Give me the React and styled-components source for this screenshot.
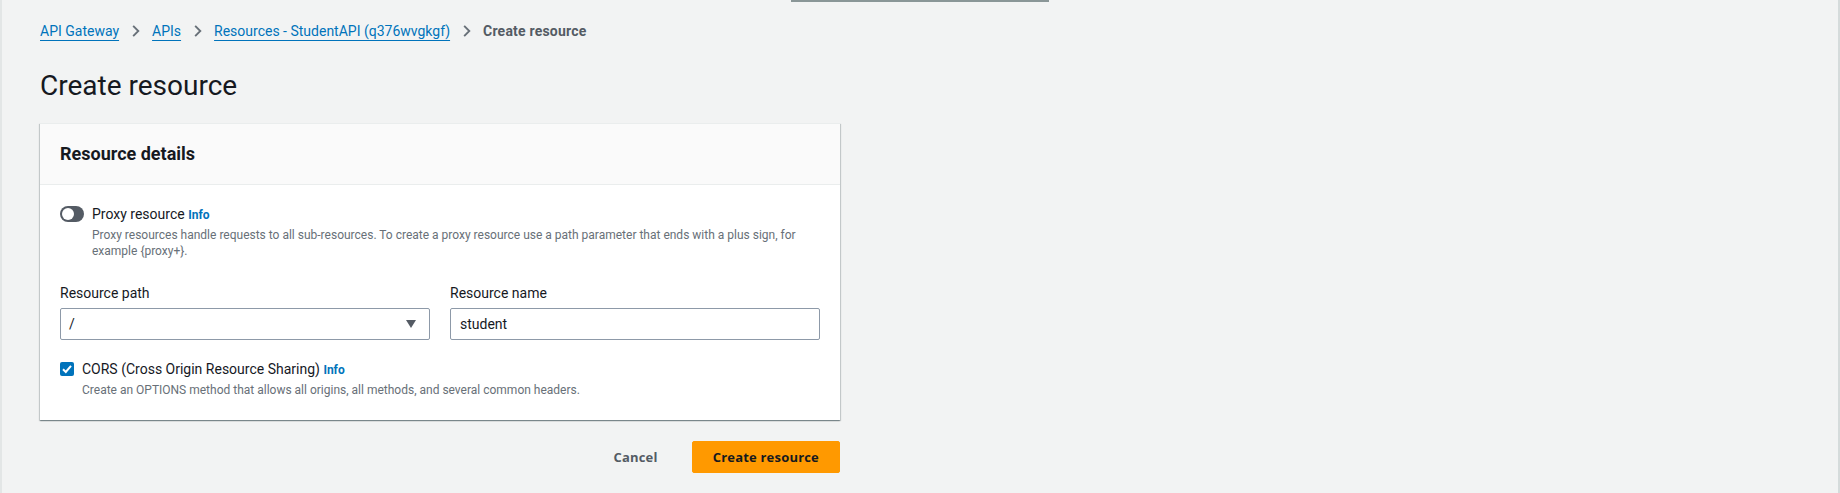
import React, { useState } from "react";
import styled, { createGlobalStyle } from "styled-components";

const GlobalStyle = createGlobalStyle`
  html, body {
    margin: 0;
    padding: 0;
    background: #f2f3f3;
  }
  body {
    font-family: Roboto, "Noto Sans", "Liberation Sans", sans-serif;
    color: #16191f;
  }
`;

function Chevron() {
  return (
    <ChevronIcon viewBox="0 0 16 16" width="15" height="16">
      <path d="M5.5 2.5 L11 8 L5.5 13.5" fill="none" stroke="#687078" strokeWidth="2" />
    </ChevronIcon>
  );
}

function CheckMark() {
  return (
    <svg viewBox="0 0 14 14" width="14" height="14">
      <path d="M3 7.2 L5.8 10 L11 3.8" fill="none" stroke="#fff" strokeWidth="2" />
    </svg>
  );
}

export default function App() {
  const [proxy, setProxy] = useState(false);
  const [cors, setCors] = useState(true);

  return (
    <Page>
      <GlobalStyle />
      <TopStrip>
        <TopBar />
      </TopStrip>

      <Content>
        {/* breadcrumbs */}
        <Crumbs>
          <CrumbLink href="#">API Gateway</CrumbLink>
          <Chevron />
          <CrumbLink href="#">APIs</CrumbLink>
          <Chevron />
          <CrumbLink href="#">Resources - StudentAPI (q376wvgkgf)</CrumbLink>
          <Chevron />
          <CrumbCurrent>Create resource</CrumbCurrent>
        </Crumbs>

        <PageTitle>Create resource</PageTitle>

        <Card>
          <CardHeader>
            <CardTitle>Resource details</CardTitle>
          </CardHeader>

          <CardBody>
            <OptionRow>
              <Toggle on={proxy} onClick={() => setProxy(!proxy)}>
                <Handle />
              </Toggle>
              <OptionText>
                <OptionLabel>
                  Proxy resource <Info href="#">Info</Info>
                </OptionLabel>
                <Hint>
                  Proxy resources handle requests to all sub-resources. To create a proxy resource use a path parameter that ends with a plus sign, for
                  <br />
                  example {"{proxy+}"}.
                </Hint>
              </OptionText>
            </OptionRow>

            <FieldGrid>
              <Field>
                <FieldLabel>Resource path</FieldLabel>
                <SelectBox>
                  <span>/</span>
                  <Caret viewBox="0 0 12 10" width="12" height="10">
                    <path d="M1 1 L11 1 L6 9 Z" fill="#545b64" />
                  </Caret>
                </SelectBox>
              </Field>
              <Field>
                <FieldLabel>Resource name</FieldLabel>
                <TextInput defaultValue="student" />
              </Field>
            </FieldGrid>

            <CheckRow>
              <CheckBox checked={cors} onClick={() => setCors(!cors)}>
                {cors && <CheckMark />}
              </CheckBox>
              <OptionText>
                <OptionLabel>
                  CORS (Cross Origin Resource Sharing) <Info href="#">Info</Info>
                </OptionLabel>
                <Hint>
                  Create an OPTIONS method that allows all origins, all methods, and several common headers.
                </Hint>
              </OptionText>
            </CheckRow>
          </CardBody>
        </Card>

        <Actions>
          <CancelButton>Cancel</CancelButton>
          <PrimaryButton>Create resource</PrimaryButton>
        </Actions>
      </Content>
    </Page>
  );
}

/* ---------- layout ---------- */

const Page = styled.div`
  min-height: 493px;
  box-sizing: border-box;
  border-left: 2px solid #e3e6e6;
  border-right: 2px solid #d5dbdb;
  background: #f2f3f3;
`;

const TopStrip = styled.div`
  display: flex;
  justify-content: center;
  height: 0;
`;

const TopBar = styled.div`
  width: 258px;
  height: 2px;
  background: #8a9697;
  flex-shrink: 0;
`;

const Content = styled.div`
  width: 800px;
  padding: 21px 0 0 38px;
`;

/* ---------- breadcrumbs ---------- */

const Crumbs = styled.nav`
  display: flex;
  align-items: center;
  gap: 9px;
  height: 20px;
  font-size: 14px;
  line-height: 20px;
`;

const ChevronIcon = styled.svg`
  display: block;
  flex-shrink: 0;
`;

const CrumbLink = styled.a`
  color: #0073bb;
  text-decoration: underline;
  text-underline-offset: 4px;
  white-space: nowrap;
`;

const CrumbCurrent = styled.span`
  color: #545b64;
  font-weight: 700;
  letter-spacing: 0.2px;
  white-space: nowrap;
`;

const PageTitle = styled.h1`
  margin: 27px 0 0;
  font-size: 28px;
  line-height: 36px;
  font-weight: 400;
  color: #16191f;
`;

/* ---------- card ---------- */

const Card = styled.div`
  margin-top: 19px;
  background: #fff;
  border-top: 1px solid #eaeded;
  box-shadow: 0 1px 1px 0 rgba(0, 28, 36, 0.3),
    1px 1px 1px 0 rgba(0, 28, 36, 0.15),
    -1px 1px 1px 0 rgba(0, 28, 36, 0.15);
`;

const CardHeader = styled.div`
  background: #fafafa;
  border-bottom: 1px solid #eaeded;
  padding: 18px 20px;
`;

const CardTitle = styled.h2`
  margin: 0;
  font-size: 18px;
  line-height: 24px;
  font-weight: 700;
  color: #16191f;
`;

const CardBody = styled.div`
  padding: 19px 20px 22px;
`;

const OptionRow = styled.div`
  display: flex;
  align-items: flex-start;
  gap: 8px;
`;

const CheckRow = styled(OptionRow)`
  margin-top: 19px;
`;

const OptionText = styled.div`
  display: flex;
  flex-direction: column;
  gap: 2px;
`;

const OptionLabel = styled.div`
  font-size: 14px;
  line-height: 20px;
  color: #16191f;
`;

const Info = styled.a`
  color: #0073bb;
  font-size: 12px;
  font-weight: 700;
  text-decoration: none;
`;

const Hint = styled.div`
  font-size: 12px;
  line-height: 16px;
  color: #687078;
`;

const Toggle = styled.div`
  width: 24px;
  height: 16px;
  margin-top: 2px;
  border-radius: 8px;
  background: ${({ on }) => (on ? "#0073bb" : "#545b64")};
  display: flex;
  align-items: center;
  justify-content: ${({ on }) => (on ? "flex-end" : "flex-start")};
  padding: 0 2px;
  box-sizing: border-box;
  flex-shrink: 0;
  cursor: pointer;
`;

const Handle = styled.div`
  width: 12px;
  height: 12px;
  border-radius: 50%;
  background: #fff;
`;

const CheckBox = styled.div`
  width: 14px;
  height: 14px;
  margin-top: 3px;
  border-radius: 2px;
  background: ${({ checked }) => (checked ? "#0073bb" : "#fff")};
  border: ${({ checked }) => (checked ? "none" : "2px solid #879596")};
  flex-shrink: 0;
  display: flex;
  cursor: pointer;
`;

/* ---------- fields ---------- */

const FieldGrid = styled.div`
  margin-top: 24px;
  display: grid;
  grid-template-columns: 1fr 1fr;
  gap: 20px;
`;

const Field = styled.div`
  display: flex;
  flex-direction: column;
  gap: 5px;
`;

const FieldLabel = styled.label`
  font-size: 14px;
  line-height: 20px;
  color: #16191f;
`;

const SelectBox = styled.div`
  height: 32px;
  box-sizing: border-box;
  border: 1px solid #8d99a8;
  border-radius: 2px;
  background: #fff;
  display: flex;
  align-items: center;
  justify-content: space-between;
  padding: 0 12px 0 8px;
  font-size: 14px;
  color: #16191f;
`;

const Caret = styled.svg`
  display: block;
`;

const TextInput = styled.input`
  height: 32px;
  box-sizing: border-box;
  border: 1px solid #8d99a8;
  border-radius: 2px;
  background: #fff;
  padding: 0 9px;
  font-family: inherit;
  font-size: 14px;
  color: #16191f;
  outline: none;
`;

/* ---------- actions ---------- */

const Actions = styled.div`
  margin-top: 21px;
  display: flex;
  justify-content: flex-end;
  align-items: center;
  gap: 14px;
`;

const BaseButton = styled.button`
  height: 32px;
  border-radius: 2px;
  font-family: "Open Sans", "Noto Sans", sans-serif;
  font-size: 13px;
  font-weight: 700;
  letter-spacing: 0.2px;
  white-space: nowrap;
  cursor: pointer;
`;

const CancelButton = styled(BaseButton)`
  border: none;
  background: transparent;
  color: #545b64;
  padding: 0 20px;
`;

const PrimaryButton = styled(BaseButton)`
  border: 1px solid #ff9900;
  background: #ff9900;
  color: #16191f;
  padding: 0 20px;
`;
